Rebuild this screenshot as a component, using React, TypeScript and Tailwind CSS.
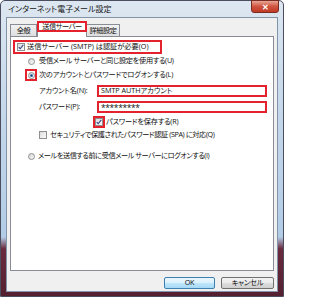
import React from 'react';

const jp = "font-['Open_Sans','Noto_Sans_CJK_JP',sans-serif] [font-feature-settings:'palt']";

function CheckBox({ checked }: { checked?: boolean }) {
  return (
    <span className="relative flex h-[8px] w-[8px] shrink-0 items-center justify-center border border-[#8e8f8f] bg-[linear-gradient(135deg,#dcdcdc,#fbfbfb)]">
      {checked && (
        <svg viewBox="0 0 8 8" className="absolute left-[0px] top-[0px] h-[6px] w-[6px]">
          <path d="M1 4.2 L3 6.3 L7 1.2" fill="none" stroke="#34478a" strokeWidth="1.5" />
        </svg>
      )}
    </span>
  );
}

function Radio({ checked }: { checked?: boolean }) {
  return (
    <span className="flex h-[7px] w-[7px] shrink-0 items-center justify-center rounded-full border border-[#8e8f8f] bg-[linear-gradient(135deg,#d4d4d4,#fafafa)]">
      {checked && <span className="h-[3px] w-[3px] rounded-full bg-[radial-gradient(circle,#1c3f7e,#5b8fd0)]" />}
    </span>
  );
}

function RedBox({ className = '', children }: { className?: string; children: React.ReactNode }) {
  return <div className={`border-2 border-[#e3222d] ${className}`}>{children}</div>;
}

export default function App() {
  return (
    <div className={`h-[300px] w-[284px] bg-white text-[7.2px] leading-none tracking-[-0.2px] text-[#0f0f0f] ${jp}`}>
      <div className="relative flex h-[297px] w-[284px] flex-col rounded-t-[5px] border border-[#4a4e5e] bg-[linear-gradient(to_bottom,#dde7f1_0%,#c9daeb_30%,#b2cce6_80%,#6a2a3e_84%,#54202f_100%)] px-[5px] pb-[4px]">
        {/* title bar */}
        <div className="flex h-[16px] shrink-0 items-center pl-[2px] text-[8px] tracking-normal text-[#161616]">
          インターネット電子メール設定
        </div>
        <div className="absolute right-[4px] top-[-1px] flex h-[13px] w-[28px] items-center justify-center rounded-b-[3px] border border-[#7a2b22] bg-[linear-gradient(to_bottom,#e8a796,#d0533f_50%,#c23a25)] text-[8px] font-bold text-white">
          ✕
        </div>

        {/* client area */}
        <div className="flex flex-1 flex-col border border-[#8294aa] bg-[#f0f0f0] px-[3px] pb-[2px] pt-[3px]">
          {/* tabs */}
          <div className="relative z-10 flex h-[15px] shrink-0 items-end tracking-[-0.4px]">
            <div className="flex h-[12px] w-[27px] items-center justify-center border border-b-0 border-[#898c95] bg-[linear-gradient(to_bottom,#f2f2f2,#dedede)]">
              全般
            </div>
            <div className="-mb-px flex h-[16px] w-[50px] flex-col border border-b-0 border-[#898c95] bg-white">
              <RedBox className="mx-[-1px] mt-[-1px] flex h-[11px] items-center justify-center">送信サーバー</RedBox>
            </div>
            <div className="flex h-[12px] w-[33px] items-center justify-center border border-b-0 border-l-0 border-[#898c95] bg-[linear-gradient(to_bottom,#f2f2f2,#dedede)]">
              詳細設定
            </div>
          </div>

          {/* tab panel */}
          <div className="flex h-[235px] shrink-0 flex-col border border-[#898c95] bg-white pt-[3px]">
            <RedBox className="ml-[2px] flex h-[14px] w-[149px] items-center gap-[2px] pl-[2px]">
              <CheckBox checked />
              <span className="tracking-normal">送信サーバー (SMTP) は認証が必要(O)</span>
            </RedBox>

            <div className="mt-[2px] flex h-[10px] items-center gap-[4px] pl-[17px]">
              <Radio />
              <span className="tracking-[-0.3px]">受信メール サーバーと同じ設定を使用する(U)</span>
            </div>

            <div className="mt-[3px] flex h-[12px] items-center gap-[2px] pl-[14px]">
              <RedBox className="flex h-[12px] w-[12px] items-center justify-center">
                <Radio checked />
              </RedBox>
              <span>次のアカウントとパスワードでログオンする(L)</span>
            </div>

            <div className="mt-[3px] flex h-[13px] items-center pl-[28px]">
              <span className="w-[58px]">アカウント名(N):</span>
              <RedBox className="flex h-[12px] w-[170px] items-center bg-white pl-[2px] tracking-normal">SMTP AUTHアカウント</RedBox>
            </div>

            <div className="mt-[3px] flex h-[13px] items-center pl-[28px]">
              <span className="w-[58px]">パスワード(P):</span>
              <RedBox className="flex h-[12px] w-[170px] items-start bg-white pl-[2px] pt-[1px] text-[8.5px] tracking-[-0.4px]">*********</RedBox>
            </div>

            <div className="mt-[2px] flex h-[13px] items-center gap-[1px] pl-[82px]">
              <RedBox className="flex h-[12px] w-[12px] items-center justify-center">
                <CheckBox checked />
              </RedBox>
              <span>パスワードを保存する(R)</span>
            </div>

            <div className="mt-[2px] flex h-[10px] items-center gap-[3px] pl-[28px]">
              <CheckBox />
              <span className="tracking-[-0.4px]">セキュリティで保護されたパスワード認証 (SPA) に対応(Q)</span>
            </div>

            <div className="mt-[11px] flex h-[10px] items-center gap-[3px] pl-[17px]">
              <Radio />
              <span className="tracking-[-0.45px]">メールを送信する前に受信メール サーバーにログオンする(I)</span>
            </div>
          </div>

          {/* buttons */}
          <div className="mt-[6px] flex justify-end gap-[6px]">
            <button className="flex h-[12px] w-[51px] items-center justify-center rounded-[2px] border border-[#3c7fb1] bg-[linear-gradient(to_bottom,#eaf6fd,#d9f0fc_50%,#bee6fd_51%,#a7d9f5)]">
              OK
            </button>
            <button className="flex h-[12px] w-[53px] items-center justify-center rounded-[2px] border border-[#707070] bg-[linear-gradient(to_bottom,#f2f2f2,#ebebeb_50%,#dddddd_51%,#cfcfcf)]">
              キャンセル
            </button>
          </div>
        </div>
      </div>
    </div>
  );
}
